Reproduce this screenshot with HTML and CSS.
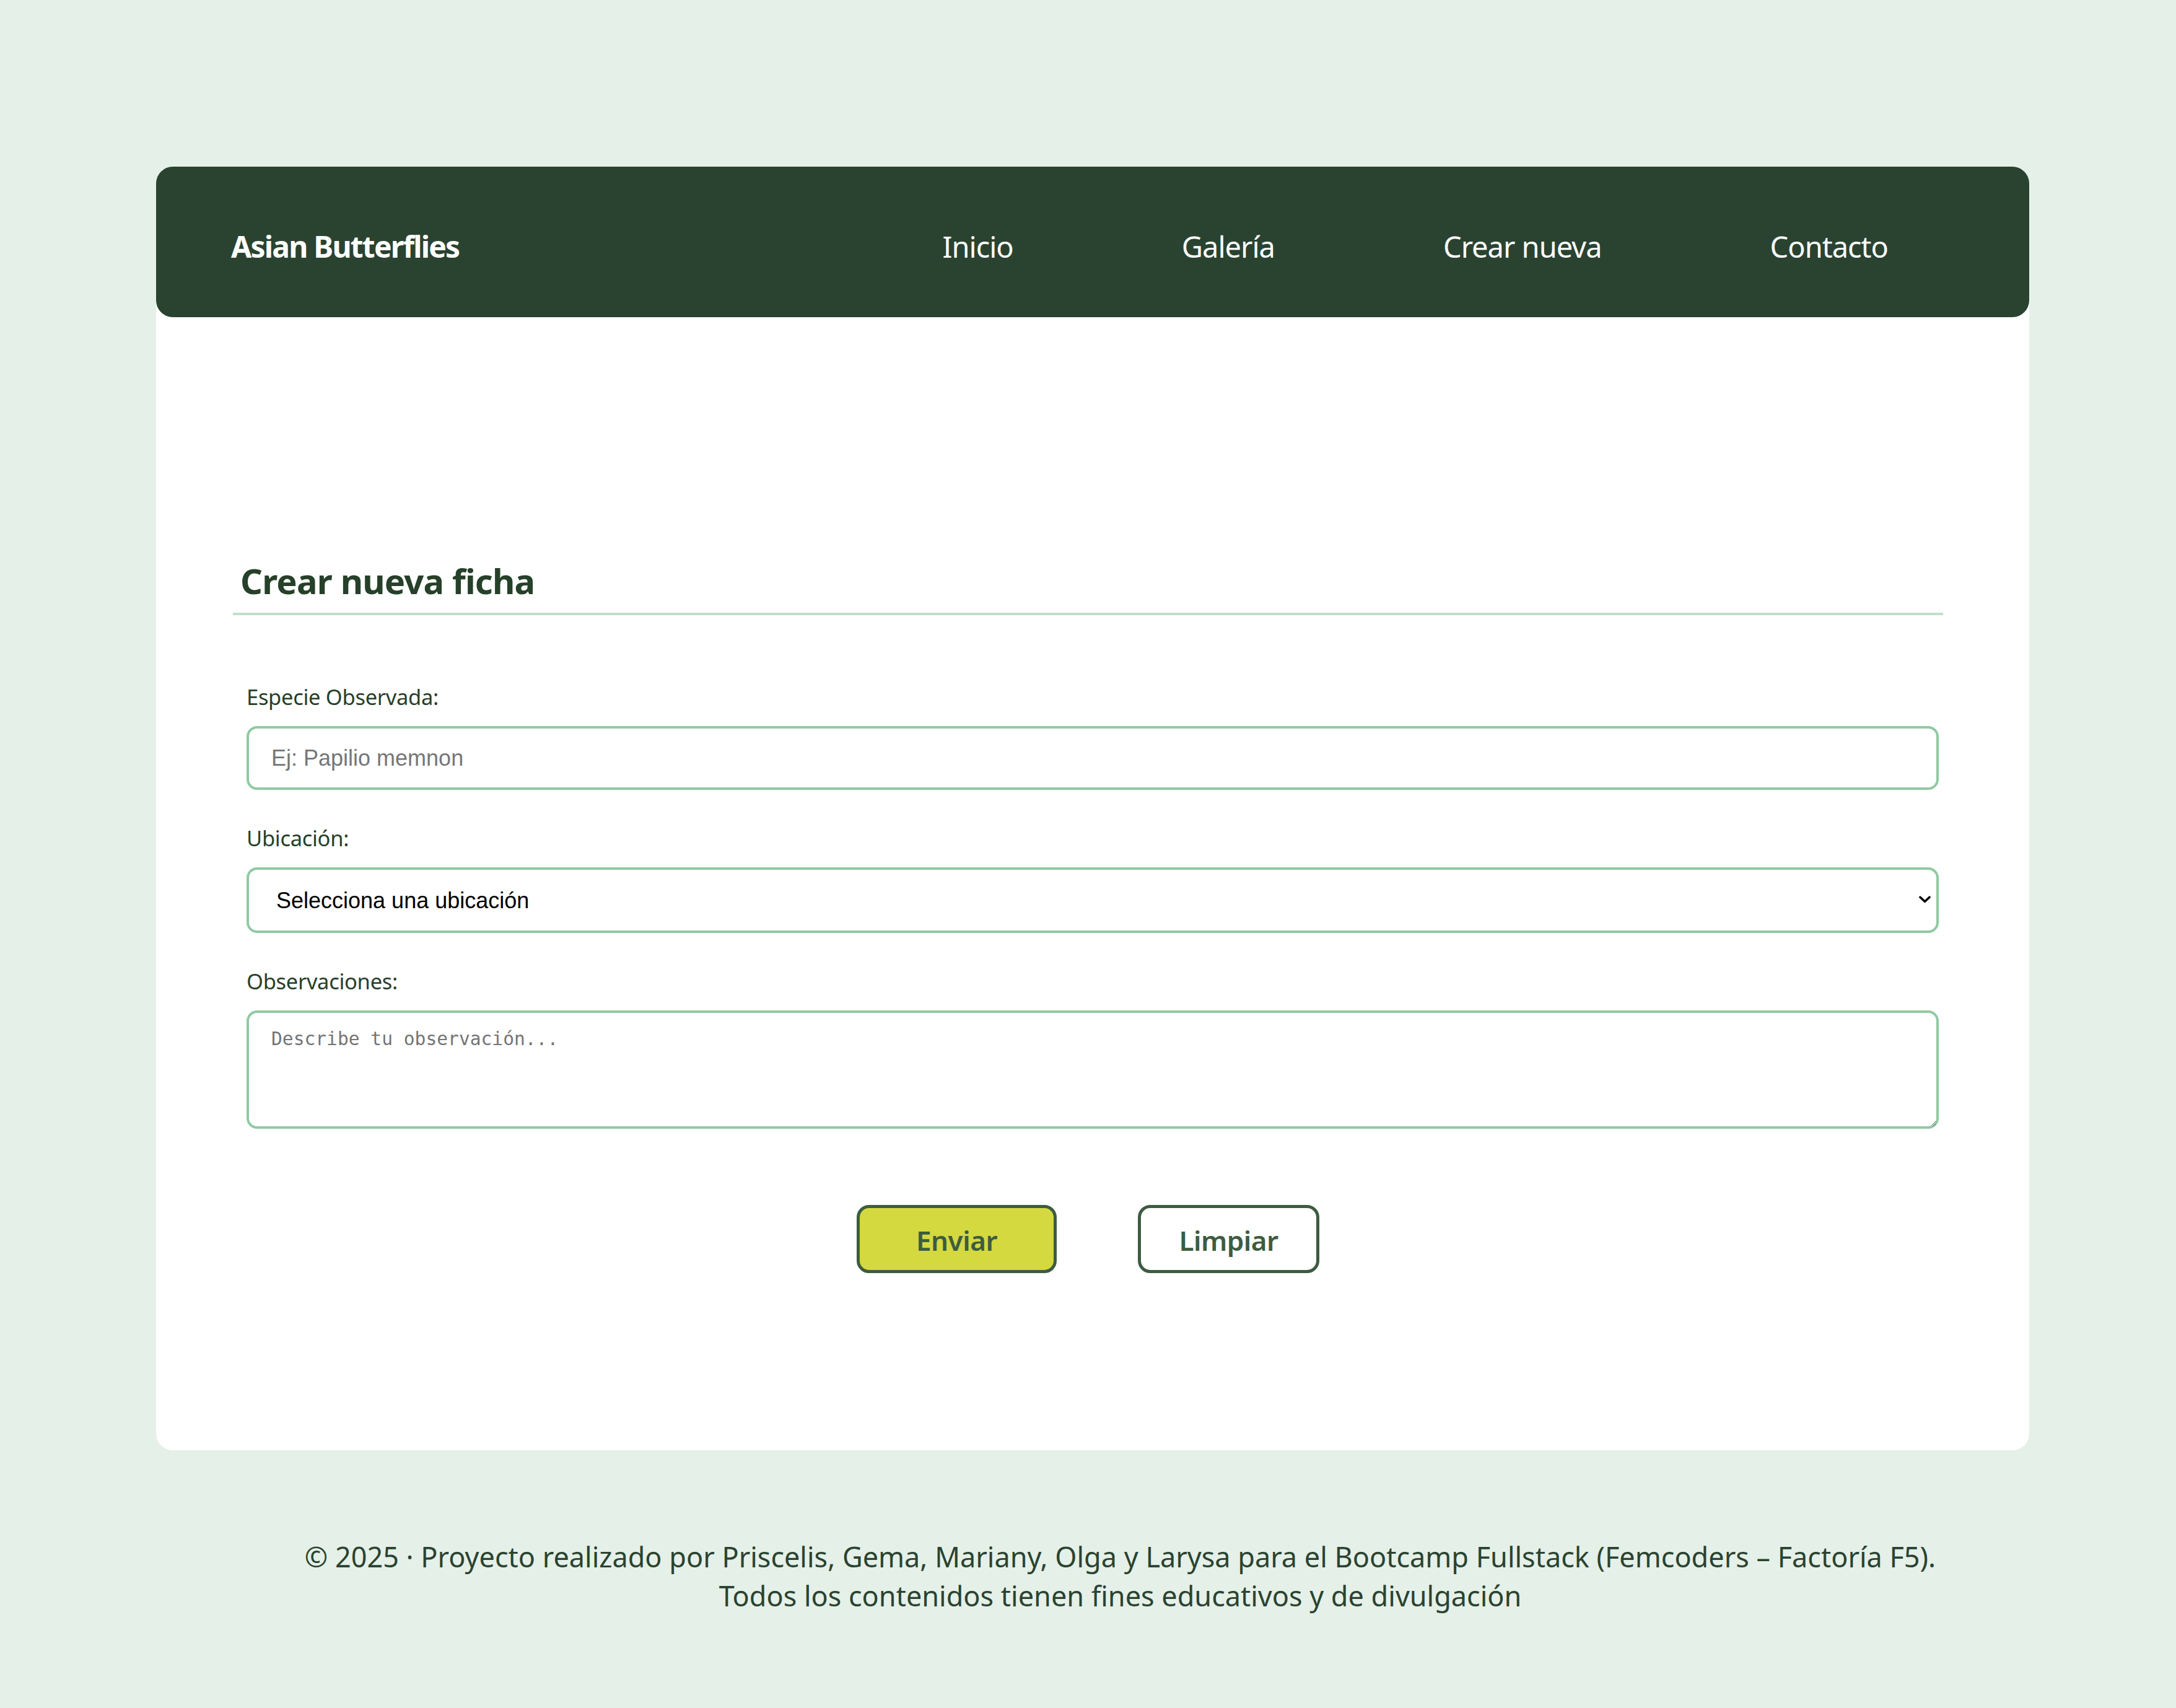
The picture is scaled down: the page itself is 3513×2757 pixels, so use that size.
FILE: index.html
```html
<!DOCTYPE html>
<html lang="es">
<head>
<meta charset="utf-8">
<title>Crear nueva ficha - Asian Butterflies</title>
<link rel="stylesheet" href="styles.css">
</head>
<body>
<div class="card">
  <header class="site-header">
    <div class="brand">Asian Butterflies</div>
    <nav class="nav">
      <a href="#" class="nav-link">Inicio</a>
      <a href="#" class="nav-link">Galería</a>
      <a href="#" class="nav-link">Crear nueva</a>
      <a href="#" class="nav-link">Contacto</a>
    </nav>
  </header>
  <main class="content">
    <section class="form-section">
      <h2 class="section-title">Crear nueva ficha</h2>
      <form class="form">
        <label class="field-label" for="especie">Especie Observada:</label>
        <input class="field-input" id="especie" type="text" placeholder="Ej: Papilio memnon">
        <label class="field-label" for="ubicacion">Ubicación:</label>
        <div class="select-wrap">
          <select class="field-select" id="ubicacion">
            <option>Selecciona una ubicación</option>
          </select>
          <svg class="chevron" width="19" height="12" viewBox="0 0 19 12"><path d="M2 2.2 L9.5 9.2 L17 2.2" fill="none" stroke="#000" stroke-width="3.6" stroke-linecap="round" stroke-linejoin="round"/></svg>
        </div>
        <label class="field-label" for="obs">Observaciones:</label>
        <textarea class="field-textarea" id="obs" placeholder="Describe tu observación..."></textarea>
        <div class="actions">
          <button type="button" class="btn btn-primary">Enviar</button>
          <button type="button" class="btn btn-secondary">Limpiar</button>
        </div>
      </form>
    </section>
  </main>
</div>
<footer class="site-footer">
  <p class="footer-line">© 2025 · Proyecto realizado por Priscelis, Gema, Mariany, Olga y Larysa para el Bootcamp Fullstack (Femcoders – Factoría F5).</p>
  <p class="footer-line">Todos los contenidos tienen fines educativos y de divulgación</p>
</footer>
</body>
</html>
```
FILE: styles.css
```css
* { box-sizing: border-box; }

html, body {
  margin: 0;
  padding: 0;
}

body {
  background: #e5f0e8;
  font-family: "Noto Sans", "Open Sans", sans-serif;
  color: #2a4330;
  min-height: 2757px;
  padding-top: 269px;
}

.card {
  width: 3024px;
  margin-left: 252px;
  background: #ffffff;
  border-radius: 27px;
  height: 2072px;
  display: flex;
  flex-direction: column;
}

.site-header {
  height: 243px;
  background: #2a4330;
  border-radius: 27px;
  display: flex;
  align-items: center;
  padding: 14px 228px 0 121px;
}

.brand {
  color: #ffffff;
  font-weight: 700;
  font-size: 48px;
  letter-spacing: -1.8px;
  white-space: nowrap;
}

.nav {
  margin-left: auto;
  display: flex;
  gap: 272px;
}

.nav-link {
  color: #ffffff;
  text-decoration: none;
  font-size: 47px;
  letter-spacing: -1px;
  white-space: nowrap;
}

.content {
  flex: 1;
}

.form-section {
  margin-left: 124px;
  width: 2761px;
  padding-top: 390px;
}

.section-title {
  margin: 0;
  padding: 0 0 17px 12px;
  font-size: 56px;
  line-height: 70px;
  font-weight: 700;
  color: #264029;
  letter-spacing: -0.8px;
  border-bottom: 4px solid #bfe0ca;
}

.form {
  display: flex;
  flex-direction: column;
  padding: 112px 7px 0 22px;
}

.field-label {
  display: block;
  font-size: 34.5px;
  line-height: 40px;
  color: #264029;
  letter-spacing: -0.3px;
  margin-bottom: 27px;
}

.field-input,
.field-select,
.field-textarea {
  width: 100%;
  border: 4px solid #8fc9a2;
  border-radius: 17px;
  background: #ffffff;
  outline: none;
}

.field-input {
  height: 103px;
  padding: 0 36px;
  font-family: "Liberation Sans", Arial, sans-serif;
  font-size: 36px;
  color: #222;
  margin-bottom: 58px;
}

.field-input::placeholder {
  color: #767676;
}

.select-wrap {
  position: relative;
  margin-bottom: 58px;
}

.field-select {
  display: block;
  height: 106px;
  padding: 0 44px;
  appearance: none;
  -webkit-appearance: none;
  font-family: "Liberation Sans", Arial, sans-serif;
  font-size: 36px;
  color: #000000;
}

.chevron {
  position: absolute;
  right: 13px;
  top: 46px;
  pointer-events: none;
}

.field-textarea {
  display: block;
  height: 191px;
  padding: 25px 36px;
  font-family: "DejaVu Sans Mono", "Liberation Mono", monospace;
  font-size: 29.6px;
  line-height: 34px;
  color: #222;
  resize: vertical;
}

.field-textarea::placeholder {
  color: #757575;
}

.actions {
  display: flex;
  justify-content: center;
  gap: 131px;
  margin-top: 123px;
  padding-right: 15px;
}

.btn {
  height: 110px;
  border: 5px solid #3d5c40;
  border-radius: 20px;
  font-family: "Noto Sans", "Open Sans", sans-serif;
  font-size: 44px;
  font-weight: 600;
  color: #3d5c40;
  letter-spacing: -0.5px;
  cursor: pointer;
  padding: 4px 0 0;
}

.btn-primary {
  width: 323px;
  background: #d4d93f;
}

.btn-secondary {
  width: 293px;
  background: #ffffff;
}

.site-footer {
  margin-top: 140px;
  padding-left: 104px;
  text-align: center;
}

.footer-line {
  margin: 0;
  font-size: 45px;
  line-height: 63px;
  color: #2a4330;
  letter-spacing: 0;
}
```
